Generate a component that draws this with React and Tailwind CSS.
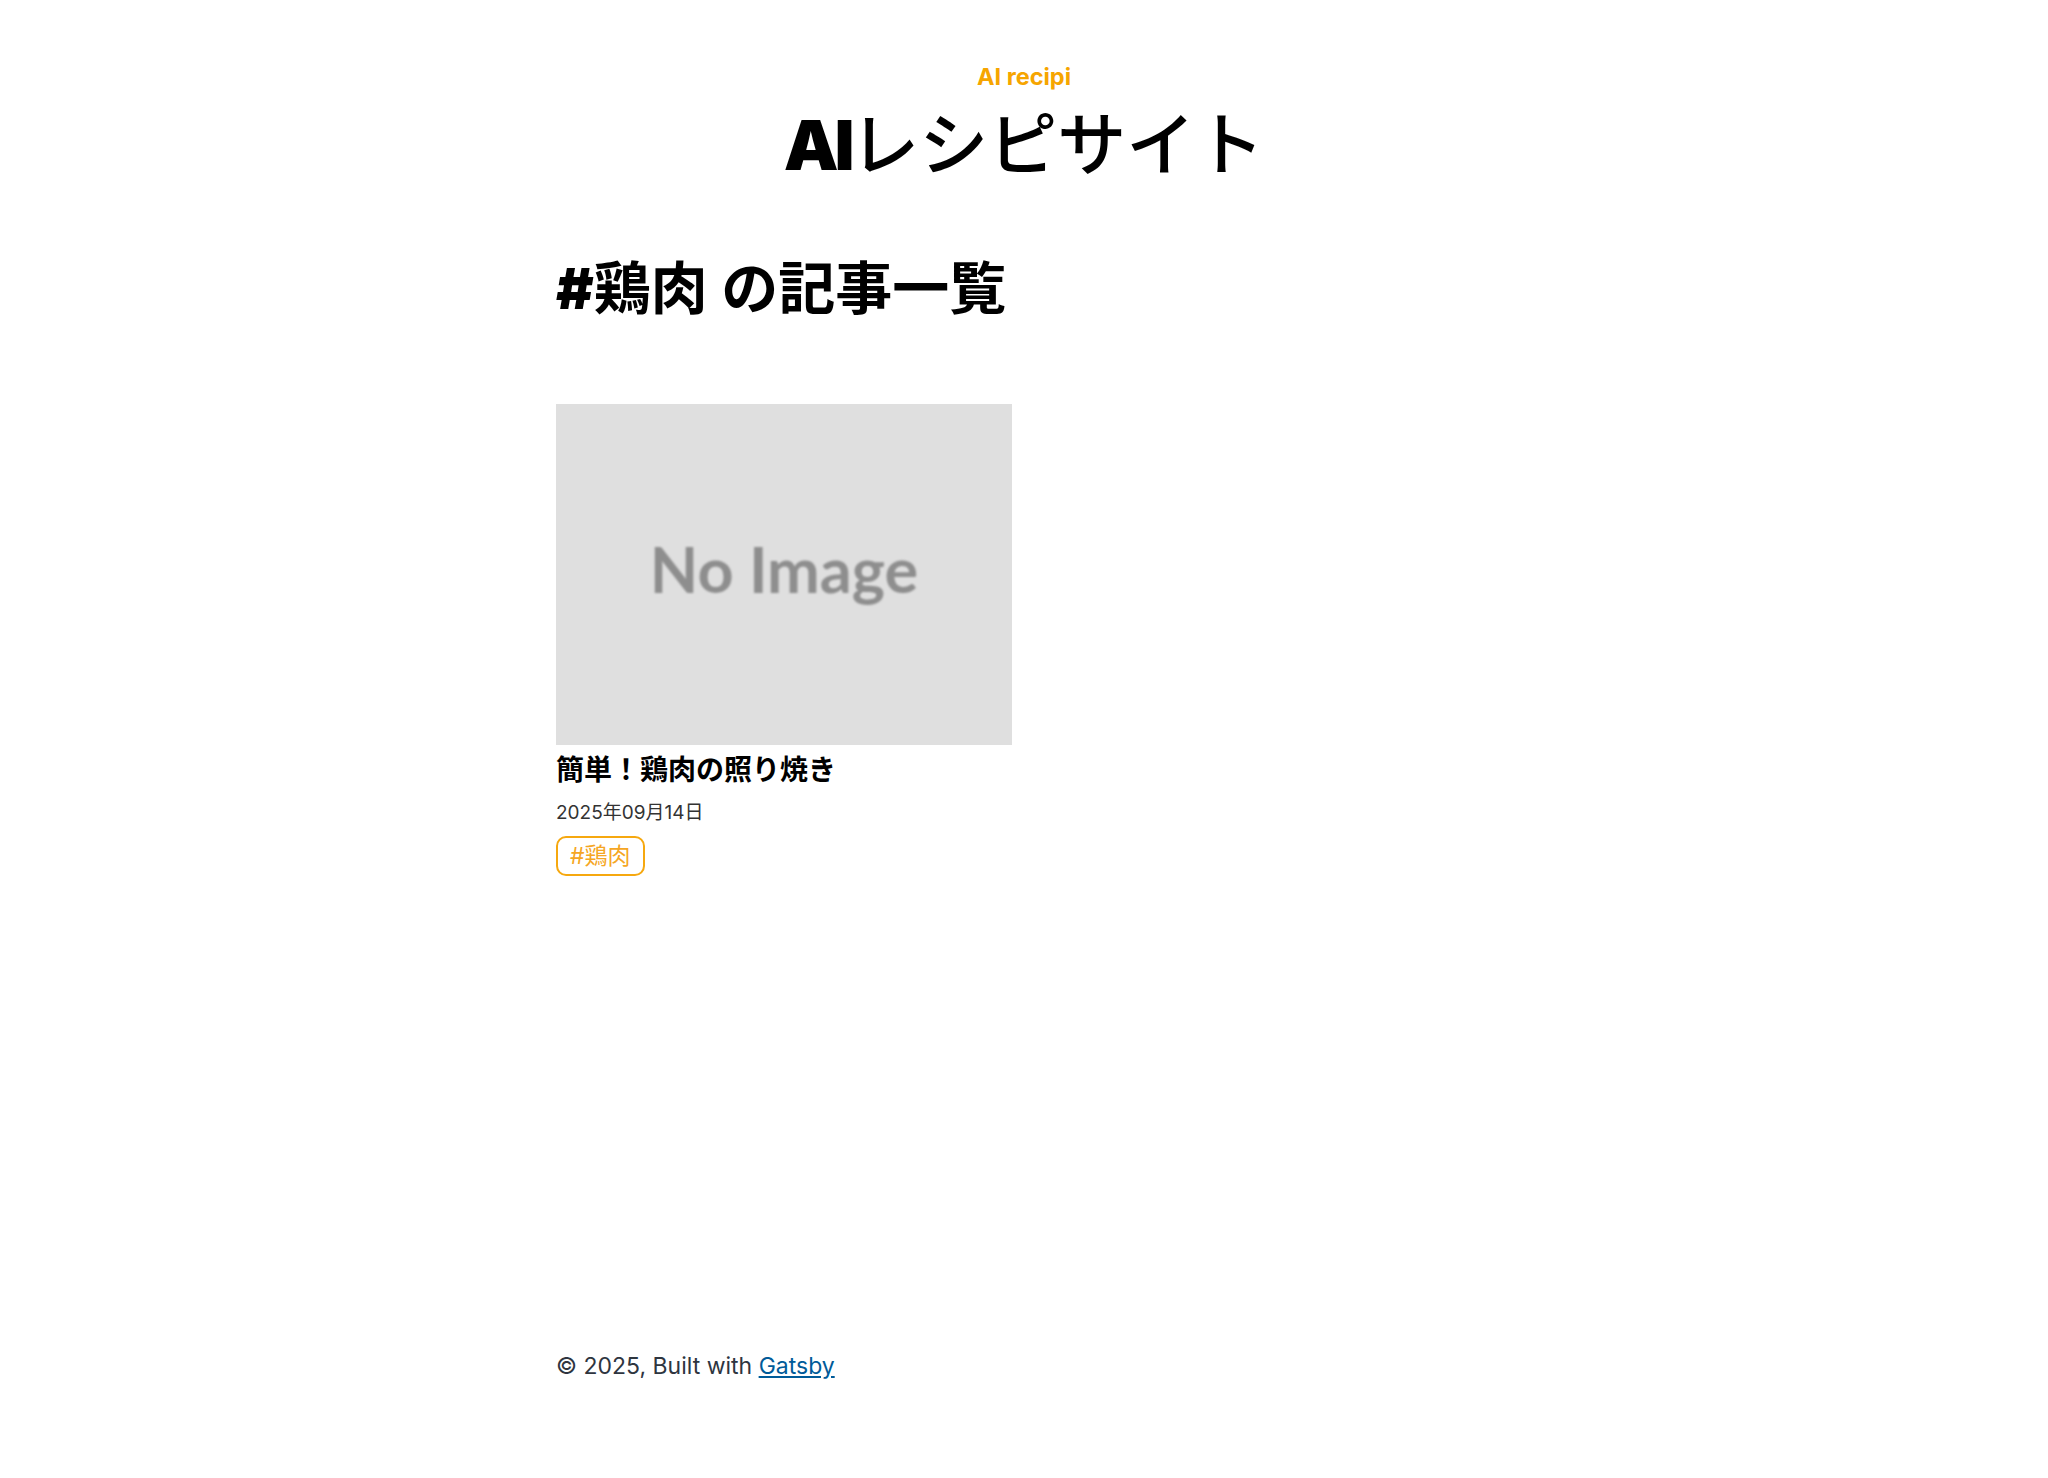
import React from 'react';

const jp = { fontFamily: 'Inter, "Noto Sans CJK JP", sans-serif' };

const Post = ({ title, date, tags }) => (
  <article className="w-[456px]">
    {/* thumbnail placeholder */}
    <div className="h-[341px] w-[456px] bg-[#dfdfdf] flex items-center justify-center overflow-hidden">
      <span
        className="text-[63px] font-bold text-[#8e8e8e] leading-none blur-[1px] -mt-[12px]"
        style={{ fontFamily: 'Lato, sans-serif' }}
      >
        No Image
      </span>
    </div>
    <h3 className="mt-[9px] text-[28px] leading-[32px] font-bold text-black">{title}</h3>
    <p className="mt-[14px] text-[19px] leading-[26px] text-[#333]">{date}</p>
    <div className="mt-[10px] flex gap-2">
      {tags.map((t) => (
        <span
          key={t}
          className="h-[40px] px-[12px] flex items-center rounded-[10px] border-2 border-[#f6a80f] text-[23px] text-[#f5a623]"
        >
          #{t}
        </span>
      ))}
    </div>
  </article>
);

export default function App() {
  return (
    <div className="w-full bg-white min-h-[1478px]" style={jp}>
      <div className="mx-auto w-[936px] pt-[62px] pb-[80px]">
        <header className="text-center">
          <p className="text-[23.5px] leading-[30px] font-bold text-[#f6a500]">AI recipi</p>
          <h1 className="mt-[13px] text-[69px] leading-[80px] text-black">
            <span className="font-black tracking-[-0.06em]">AI</span>
            <span className="font-medium">レシピサイト</span>
          </h1>
        </header>

        <main>
          <h2 className="mt-[72px] text-[57px] leading-[64px] font-bold text-black">
            <span className="font-black">#</span>鶏肉 の記事一覧
          </h2>
          <div className="mt-[83px]">
            <Post title="簡単！鶏肉の照り焼き" date="2025年09月14日" tags={['鶏肉']} />
          </div>
        </main>

        <footer className="mt-[474px] text-[23px] leading-[32px] text-[#2e353f]">
          © 2025, Built with{' '}
          <a href="#" className="text-[#005b99] underline">
            Gatsby
          </a>
        </footer>
      </div>
    </div>
  );
}
